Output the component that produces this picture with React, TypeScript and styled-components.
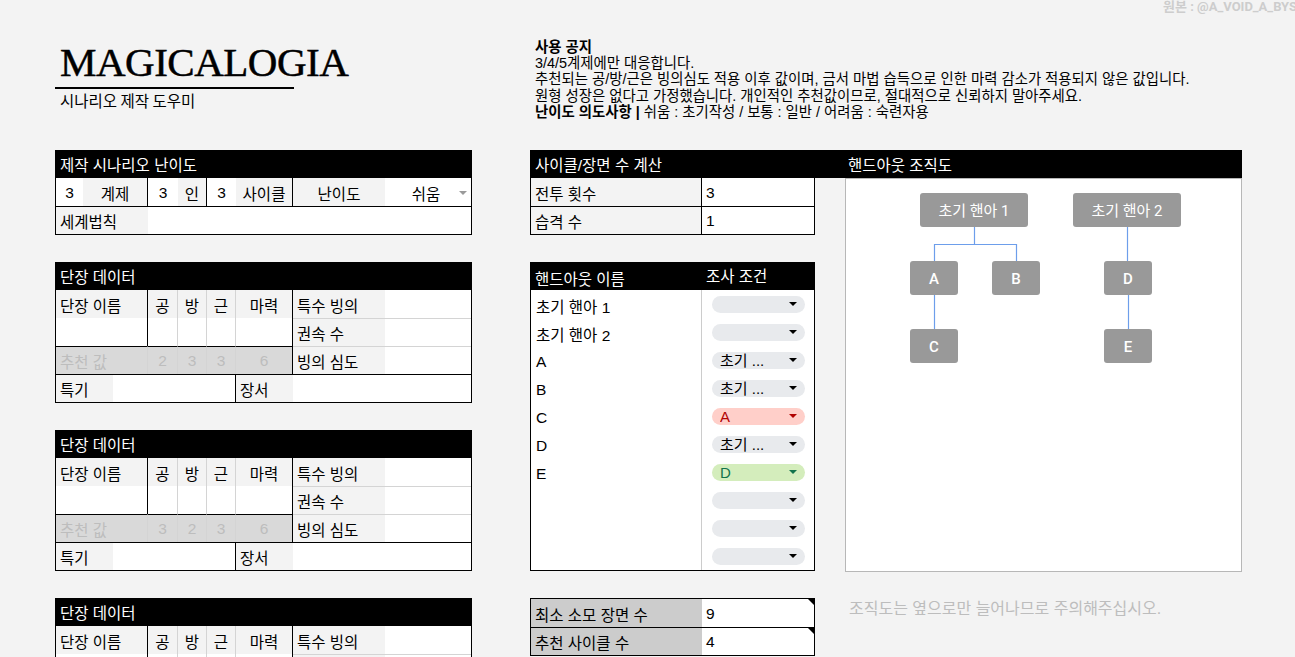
import styled, { createGlobalStyle } from "styled-components";

const GlobalStyle = createGlobalStyle`
    html, body {
        margin: 0;
        padding: 0;
        background: #f3f3f3;
        overflow: hidden;
    }
    * { box-sizing: border-box; }
`

const FONT = `"Liberation Sans", "Noto Sans CJK KR", sans-serif`
const COLS = "27px 30px 35px 30px 29px 29px 57px 92px 86px"

const Page = styled.div`
    width: 1295px;
    height: 657px;
    padding-left: 55px;
    font-family: ${FONT};
    color: #000;
`

const Credit = styled.div`
    height: 14px;
    margin-left: 1108px;
    font-family: Roboto, "Noto Sans CJK KR", sans-serif;
    font-size: 13px;
    font-weight: 700;
    line-height: 13px;
    color: #cdcdcd;
    white-space: nowrap;
`

const Top = styled.div`
    height: 136px;
    display: flex;
`

const TitleBlock = styled.div`
    width: 480px;
    padding-top: 27px;
`

const Title = styled.div`
    font-family: "Liberation Serif", serif;
    font-size: 41px;
    letter-spacing: -0.5px;
    line-height: 42px;
    height: 42px;
    padding-left: 5px;
    -webkit-text-stroke: 0.5px #000;
`

const Rule = styled.div`
    width: 239px;
    height: 2px;
    margin-top: 4px;
    background: #000;
`

const Subtitle = styled.div`
    margin-top: 2px;
    padding-left: 5px;
    font-family: "Noto Sans CJK KR", sans-serif;
    font-size: 15.5px;
    line-height: 19px;
`

const Notice = styled.div`
    padding-top: 25px;
    font-size: 14.4px;
    line-height: 16.2px;
    white-space: nowrap;
`

const Strong = styled.span`
    font-weight: 700;
`

const Main = styled.div`
    display: flex;
    gap: 58px;
    align-items: flex-start;
`

const Column = styled.div<{ $width: number }>`
    width: ${p => p.$width}px;
    display: flex;
    flex-direction: column;
    gap: 27px;
`

const Block = styled.div``

const SectionHead = styled.div`
    height: 28px;
    background: #000;
    color: #fff;
    font-size: 15.5px;
    padding-left: 5px;
    display: flex;
    align-items: center;
    white-space: nowrap;
`

const Grid = styled.div<{ $cols: string; $topBorder?: boolean }>`
    display: grid;
    grid-template-columns: ${p => p.$cols};
    grid-auto-rows: 28px;
    border: 1px solid #000;
    border-top: ${p => (p.$topBorder ? "1px solid #000" : "none")};
    background: #fff;
`

type Tone = "label" | "white" | "dim" | "dark"
type Line = "black" | "light"

const toneBg: Record<Tone, string> = {
    label: "#f3f3f3",
    white: "#ffffff",
    dim: "#d9d9d9",
    dark: "#cccccc",
}

const lineColor = (l?: Line) =>
    l === "black" ? "1px solid #000" : l === "light" ? "1px solid #d4d4d4" : "none"

const Cell = styled.div<{
    $span?: number
    $tone?: Tone
    $center?: boolean
    $right?: Line
    $top?: Line
}>`
    grid-column: span ${p => p.$span ?? 1};
    position: relative;
    display: flex;
    align-items: center;
    justify-content: ${p => (p.$center ? "center" : "flex-start")};
    padding: 1px 4px 0;
    background: ${p => toneBg[p.$tone ?? "white"]};
    color: ${p => (p.$tone === "dim" ? "#bdbdbd" : "#000")};
    border-right: ${p => lineColor(p.$right)};
    border-top: ${p => lineColor(p.$top)};
    font-size: 15.5px;
    white-space: nowrap;
    overflow: hidden;
`

const CellText = styled.span`
    flex: 1;
    text-align: center;
    padding-left: 4px;
`

const Caret = styled.span<{ $color?: string }>`
    width: 0;
    height: 0;
    flex: none;
    border-left: 4px solid transparent;
    border-right: 4px solid transparent;
    border-top: 4.5px solid ${p => p.$color ?? "#000"};
`

const Corner = styled.span`
    position: absolute;
    top: 0;
    right: 0;
    width: 0;
    height: 0;
    border-left: 6px solid transparent;
    border-top: 6px solid #000;
`

const HeaderBar = styled.div`
    height: 28px;
    background: #000;
    color: #fff;
    font-size: 15.5px;
    display: flex;
    align-items: center;
    white-space: nowrap;
`

const HeaderTitle = styled.div<{ $width?: number; $pad: number }>`
    width: ${p => (p.$width ? `${p.$width}px` : "auto")};
    padding-left: ${p => p.$pad}px;
`

const Split = styled.div`
    display: flex;
    gap: 30px;
    align-items: flex-start;
`

const HandoutHead = styled.div`
    height: 28px;
    background: #000;
    color: #fff;
    font-size: 15.5px;
    display: grid;
    grid-template-columns: 171px 1fr;
    align-items: center;
    white-space: nowrap;
`

const HeadCell = styled.div<{ $shift: number }>`
    padding-left: 5px;
    transform: translateY(${p => p.$shift}px);
`

const NameCell = styled.div<{ $divider?: boolean }>`
    display: flex;
    align-items: center;
    padding: 4px 5px 0;
    font-size: 15.5px;
    border-right: ${p => (p.$divider ? "1px solid #cccccc" : "none")};
    white-space: nowrap;
`

const ChipCell = styled.div`
    display: flex;
    align-items: center;
    padding-left: 10px;
`

const chipColors = {
    plain: { bg: "#e8eaed", fg: "#000" },
    red: { bg: "#ffcfc9", fg: "#b10202" },
    green: { bg: "#d4edbc", fg: "#11734b" },
}

type ChipKind = keyof typeof chipColors

const Chip = styled.div<{ $kind: ChipKind }>`
    width: 93px;
    height: 17px;
    border-radius: 9px;
    background: ${p => chipColors[p.$kind].bg};
    color: ${p => chipColors[p.$kind].fg};
    display: flex;
    align-items: center;
    padding: 0 8px;
    font-size: 15px;
    line-height: 17px;
`

const ChipLabel = styled.span`
    flex: 1;
    overflow: hidden;
    white-space: nowrap;
`

const ChartBox = styled.div`
    width: 397px;
    height: 394px;
    background: #fff;
    border: 1px solid #b7b7b7;
`

const ChartNote = styled.div`
    margin-top: 27px;
    padding-left: 4px;
    font-size: 16px;
    line-height: 20px;
    color: #bdbdbd;
    white-space: nowrap;
`

const Difficulty = () => (
    <Block>
        <SectionHead>제작 시나리오 난이도</SectionHead>
        <Grid $cols={COLS}>
            <Cell $center>3</Cell>
            <Cell $span={2} $tone="label" $center $right="black">계제</Cell>
            <Cell $center>3</Cell>
            <Cell $tone="label" $center $right="black">인</Cell>
            <Cell $center>3</Cell>
            <Cell $tone="label" $center $right="black">사이클</Cell>
            <Cell $tone="label" $center>난이도</Cell>
            <Cell>
                <CellText>쉬움</CellText>
                <Caret $color="#9a9a9a" />
            </Cell>
            <Cell $span={3} $tone="label" $top="black">세계법칙</Cell>
            <Cell $span={6} $top="black" />
        </Grid>
    </Block>
)

const UnitTable = ({ rec }: { rec: string[] }) => (
    <Block>
        <SectionHead>단장 데이터</SectionHead>
        <Grid $cols={COLS}>
            <Cell $span={3} $tone="label" $right="black">단장 이름</Cell>
            <Cell $tone="label" $center $right="light">공</Cell>
            <Cell $tone="label" $center $right="light">방</Cell>
            <Cell $tone="label" $center $right="light">근</Cell>
            <Cell $tone="label" $center $right="black">마력</Cell>
            <Cell $tone="label">특수 빙의</Cell>
            <Cell />

            <Cell $span={3} $right="black" />
            <Cell $right="light" />
            <Cell $right="light" />
            <Cell $right="light" />
            <Cell $right="black" />
            <Cell $tone="label" $top="light">권속 수</Cell>
            <Cell $top="light" />

            <Cell $span={3} $tone="dim" $top="black" $right="light">추천 값</Cell>
            <Cell $tone="dim" $center $top="black" $right="light">{rec[0]}</Cell>
            <Cell $tone="dim" $center $top="black" $right="light">{rec[1]}</Cell>
            <Cell $tone="dim" $center $top="black" $right="light">{rec[2]}</Cell>
            <Cell $tone="dim" $center $top="black" $right="black">{rec[3]}</Cell>
            <Cell $tone="label" $top="light">빙의 심도</Cell>
            <Cell $top="light" />

            <Cell $span={2} $tone="label" $top="black">특기</Cell>
            <Cell $span={4} $top="black" $right="black" />
            <Cell $tone="label" $top="black">장서</Cell>
            <Cell $span={2} $top="black" />
        </Grid>
    </Block>
)

const handouts: { name: string; chip: string; kind: ChipKind }[] = [
    { name: "초기 핸아 1", chip: "", kind: "plain" },
    { name: "초기 핸아 2", chip: "", kind: "plain" },
    { name: "A", chip: "초기 ...", kind: "plain" },
    { name: "B", chip: "초기 ...", kind: "plain" },
    { name: "C", chip: "A", kind: "red" },
    { name: "D", chip: "초기 ...", kind: "plain" },
    { name: "E", chip: "D", kind: "green" },
    { name: "", chip: "", kind: "plain" },
    { name: "", chip: "", kind: "plain" },
    { name: "", chip: "", kind: "plain" },
]

const nodes = [
    { label: "초기 핸아 1", x: 74, y: 14, w: 108 },
    { label: "초기 핸아 2", x: 227, y: 14, w: 108 },
    { label: "A", x: 64, y: 82, w: 48 },
    { label: "B", x: 146, y: 82, w: 48 },
    { label: "D", x: 258, y: 82, w: 48 },
    { label: "C", x: 64, y: 150, w: 48 },
    { label: "E", x: 258, y: 150, w: 48 },
]

const OrgChart = () => (
    <svg width="395" height="392" viewBox="0 0 395 392">
        <g stroke="#6d9eeb" strokeWidth="1.2" fill="none">
            <path d="M128.5 48 V65.5 M88.5 82 V65.5 H170.5 V82" />
            <path d="M88.5 116 V150" />
            <path d="M281.5 48 V82" />
            <path d="M282.5 116 V150" />
        </g>
        {nodes.map(n => (
            <g key={n.label}>
                <rect x={n.x} y={n.y} width={n.w} height={34} rx={3} fill="#999999" />
                <text
                    x={n.x + n.w / 2}
                    y={n.y + 18}
                    textAnchor="middle"
                    dominantBaseline="central"
                    fill="#ffffff"
                    fontSize="15"
                    fontWeight={n.label.length === 1 ? 500 : 400}
                    fontFamily={`Roboto, "Noto Sans CJK KR", sans-serif`}
                >
                    {n.label}
                </text>
            </g>
        ))}
    </svg>
)

const App = () => {
    return (
        <>
            <GlobalStyle />
            <Page>
                <Credit>원본 : @A_VOID_A_BYSS</Credit>
                <Top>
                    <TitleBlock>
                        <Title>MAGICALOGIA</Title>
                        <Rule />
                        <Subtitle>시나리오 제작 도우미</Subtitle>
                    </TitleBlock>
                    <Notice>
                        <Strong>사용 공지</Strong>
                        <br />
                        3/4/5계제에만 대응합니다.
                        <br />
                        추천되는 공/방/근은 빙의심도 적용 이후 값이며, 금서 마법 습득으로 인한 마력 감소가 적용되지 않은 값입니다.
                        <br />
                        원형 성장은 없다고 가정했습니다. 개인적인 추천값이므로, 절대적으로 신뢰하지 말아주세요.
                        <br />
                        <Strong>난이도 의도사항 |</Strong> 쉬움 : 초기작성 / 보통 : 일반 / 어려움 : 숙련자용
                    </Notice>
                </Top>

                <Main>
                    <Column $width={417}>
                        <Difficulty />
                        <UnitTable rec={["2", "3", "3", "6"]} />
                        <UnitTable rec={["3", "2", "3", "6"]} />
                        <UnitTable rec={["3", "3", "2", "6"]} />
                    </Column>

                    <Block>
                        <HeaderBar>
                            <HeaderTitle $width={315} $pad={5}>사이클/장면 수 계산</HeaderTitle>
                            <HeaderTitle $pad={3}>핸드아웃 조직도</HeaderTitle>
                        </HeaderBar>
                        <Split>
                            <Column $width={285}>
                                <Grid $cols="171px 1fr">
                                    <Cell $tone="label" $right="black">전투 횟수</Cell>
                                    <Cell>3</Cell>
                                    <Cell $tone="label" $right="black" $top="black">습격 수</Cell>
                                    <Cell $top="black">1</Cell>
                                </Grid>

                                <Block>
                                    <HandoutHead>
                                        <HeadCell $shift={2}>핸드아웃 이름</HeadCell>
                                        <HeadCell $shift={-1}>조사 조건</HeadCell>
                                    </HandoutHead>
                                    <Grid $cols="171px 1fr">
                                        {handouts.map((h, i) => (
                                            <>
                                                <NameCell key={`n${i}`} $divider>{h.name}</NameCell>
                                                <ChipCell key={`c${i}`}>
                                                    <Chip $kind={h.kind}>
                                                        <ChipLabel>{h.chip}</ChipLabel>
                                                        <Caret $color={chipColors[h.kind].fg} />
                                                    </Chip>
                                                </ChipCell>
                                            </>
                                        ))}
                                    </Grid>
                                </Block>

                                <Grid $cols="171px 1fr" $topBorder>
                                    <Cell $tone="dark">최소 소모 장면 수</Cell>
                                    <Cell>9<Corner /></Cell>
                                    <Cell $tone="dark" $top="black">추천 사이클 수</Cell>
                                    <Cell $top="black">4<Corner /></Cell>
                                </Grid>
                            </Column>

                            <Block>
                                <ChartBox>
                                    <OrgChart />
                                </ChartBox>
                                <ChartNote>조직도는 옆으로만 늘어나므로 주의해주십시오.</ChartNote>
                            </Block>
                        </Split>
                    </Block>
                </Main>
            </Page>
        </>
    )
}

export default App
